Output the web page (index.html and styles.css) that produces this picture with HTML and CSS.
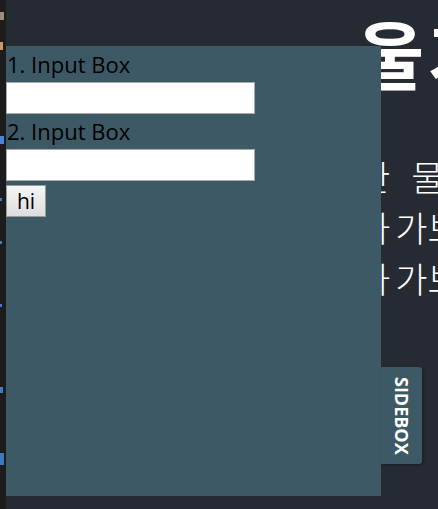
FILE: index.html
```html
<!DOCTYPE html>
<html lang="ko">
<head>
<meta charset="utf-8">
<link rel="stylesheet" href="styles.css">
</head>
<body>
<div class="gutter">
  <span class="mark m1"></span>
  <span class="mark m2"></span>
  <span class="mark m3"></span>
  <span class="mark m4"></span>
  <span class="mark m5"></span>
  <span class="mark m6"></span>
  <span class="mark m7"></span>
  <span class="mark m8"></span>
</div>
<main class="main">
  <h1 class="title">울가</h1>
  <div class="lines">
    <div class="line">한<span class="gap"></span>물가</div>
    <div class="line">하<span class="gap-s"></span>가보</div>
    <div class="line">하<span class="gap-s"></span>가보</div>
  </div>
</main>
<aside class="panel">
  <label class="label">1. Input Box</label>
  <input class="field" type="text">
  <label class="label">2. Input Box</label>
  <input class="field" type="text">
  <button class="btn">hi</button>
  <div class="tab">SIDEBOX</div>
</aside>
</body>
</html>
```

FILE: styles.css
```css
html, body {
  margin: 0;
  padding: 0;
}
body {
  width: 438px;
  height: 509px;
  overflow: hidden;
  background: #262a33;
  display: flex;
  font-family: "Noto Sans CJK KR", "Noto Sans", sans-serif;
}
.gutter {
  width: 6px;
  flex: none;
  height: 509px;
  background: #1c1c1c;
  display: flex;
  flex-direction: column;
  align-items: flex-start;
}
.mark {
  display: block;
  width: 2px;
  height: 3px;
  background: #3d7cc9;
}
.m1 { margin-top: 12px; width: 4px; height: 8px; background: #9a8f80; }
.m2 { margin-top: 22px; width: 3px; height: 8px; background: #c89a60; }
.m3 { margin-top: 86px; width: 4px; height: 8px; background: #4a86d4; }
.m4 { margin-top: 54px; }
.m5 { margin-top: 40px; }
.m6 { margin-top: 60px; }
.m7 { margin-top: 80px; width: 3px; height: 6px; }
.m8 { margin-top: 60px; width: 4px; height: 12px; background: #3a78c8; }
.main {
  flex: 1;
  min-width: 0;
  padding-left: 349px;
  color: #ffffff;
  overflow: hidden;
}
.title {
  margin: 9px 0 0 1px;
  font-size: 74px;
  line-height: 86px;
  font-weight: 700;
  letter-spacing: 4px;
  white-space: nowrap;
}
.lines {
  margin-top: 55px;
}
.line {
  font-size: 35px;
  line-height: 51px;
  font-weight: 300;
  white-space: nowrap;
  padding-left: 3px;
}
.gap {
  display: inline-block;
  width: 21px;
}
.gap-s {
  display: inline-block;
  width: 5px;
}
.panel {
  position: absolute;
  left: 6px;
  top: 46px;
  width: 375px;
  height: 450px;
  background: #3e5966;
  padding-top: 1px;
  box-sizing: border-box;
  display: flex;
  flex-direction: column;
  align-items: flex-start;
  font-family: "Open Sans", "Noto Sans", sans-serif;
}
.label {
  display: block;
  font-size: 22px;
  line-height: 35px;
  color: #000000;
  padding-left: 1px;
}
.field {
  width: 249px;
  height: 32px;
  box-sizing: border-box;
  margin: 0;
  border: 1px solid #a9a9a9;
  background: #ffffff;
  padding: 0 4px;
  font-size: 20px;
}
.btn {
  margin-top: 4px;
  width: 40px;
  height: 32px;
  box-sizing: border-box;
  border: 1px solid #9a9a9a;
  background: linear-gradient(#f6f6f6, #dddddd);
  font-family: "Open Sans", "Noto Sans", sans-serif;
  font-size: 21px;
  color: #000;
  padding: 0;
  line-height: 28px;
}
.tab {
  position: absolute;
  left: 375px;
  top: 321px;
  width: 41px;
  height: 97px;
  background: #3e5966;
  border-radius: 0 3px 3px 0;
  color: #ffffff;
  font-family: "Open Sans", "Noto Sans", sans-serif;
  font-weight: 700;
  font-size: 18px;
  writing-mode: vertical-rl;
  display: flex;
  align-items: center;
  justify-content: center;
  box-shadow: 1px 1px 3px rgba(0,0,0,0.35);
}
```
